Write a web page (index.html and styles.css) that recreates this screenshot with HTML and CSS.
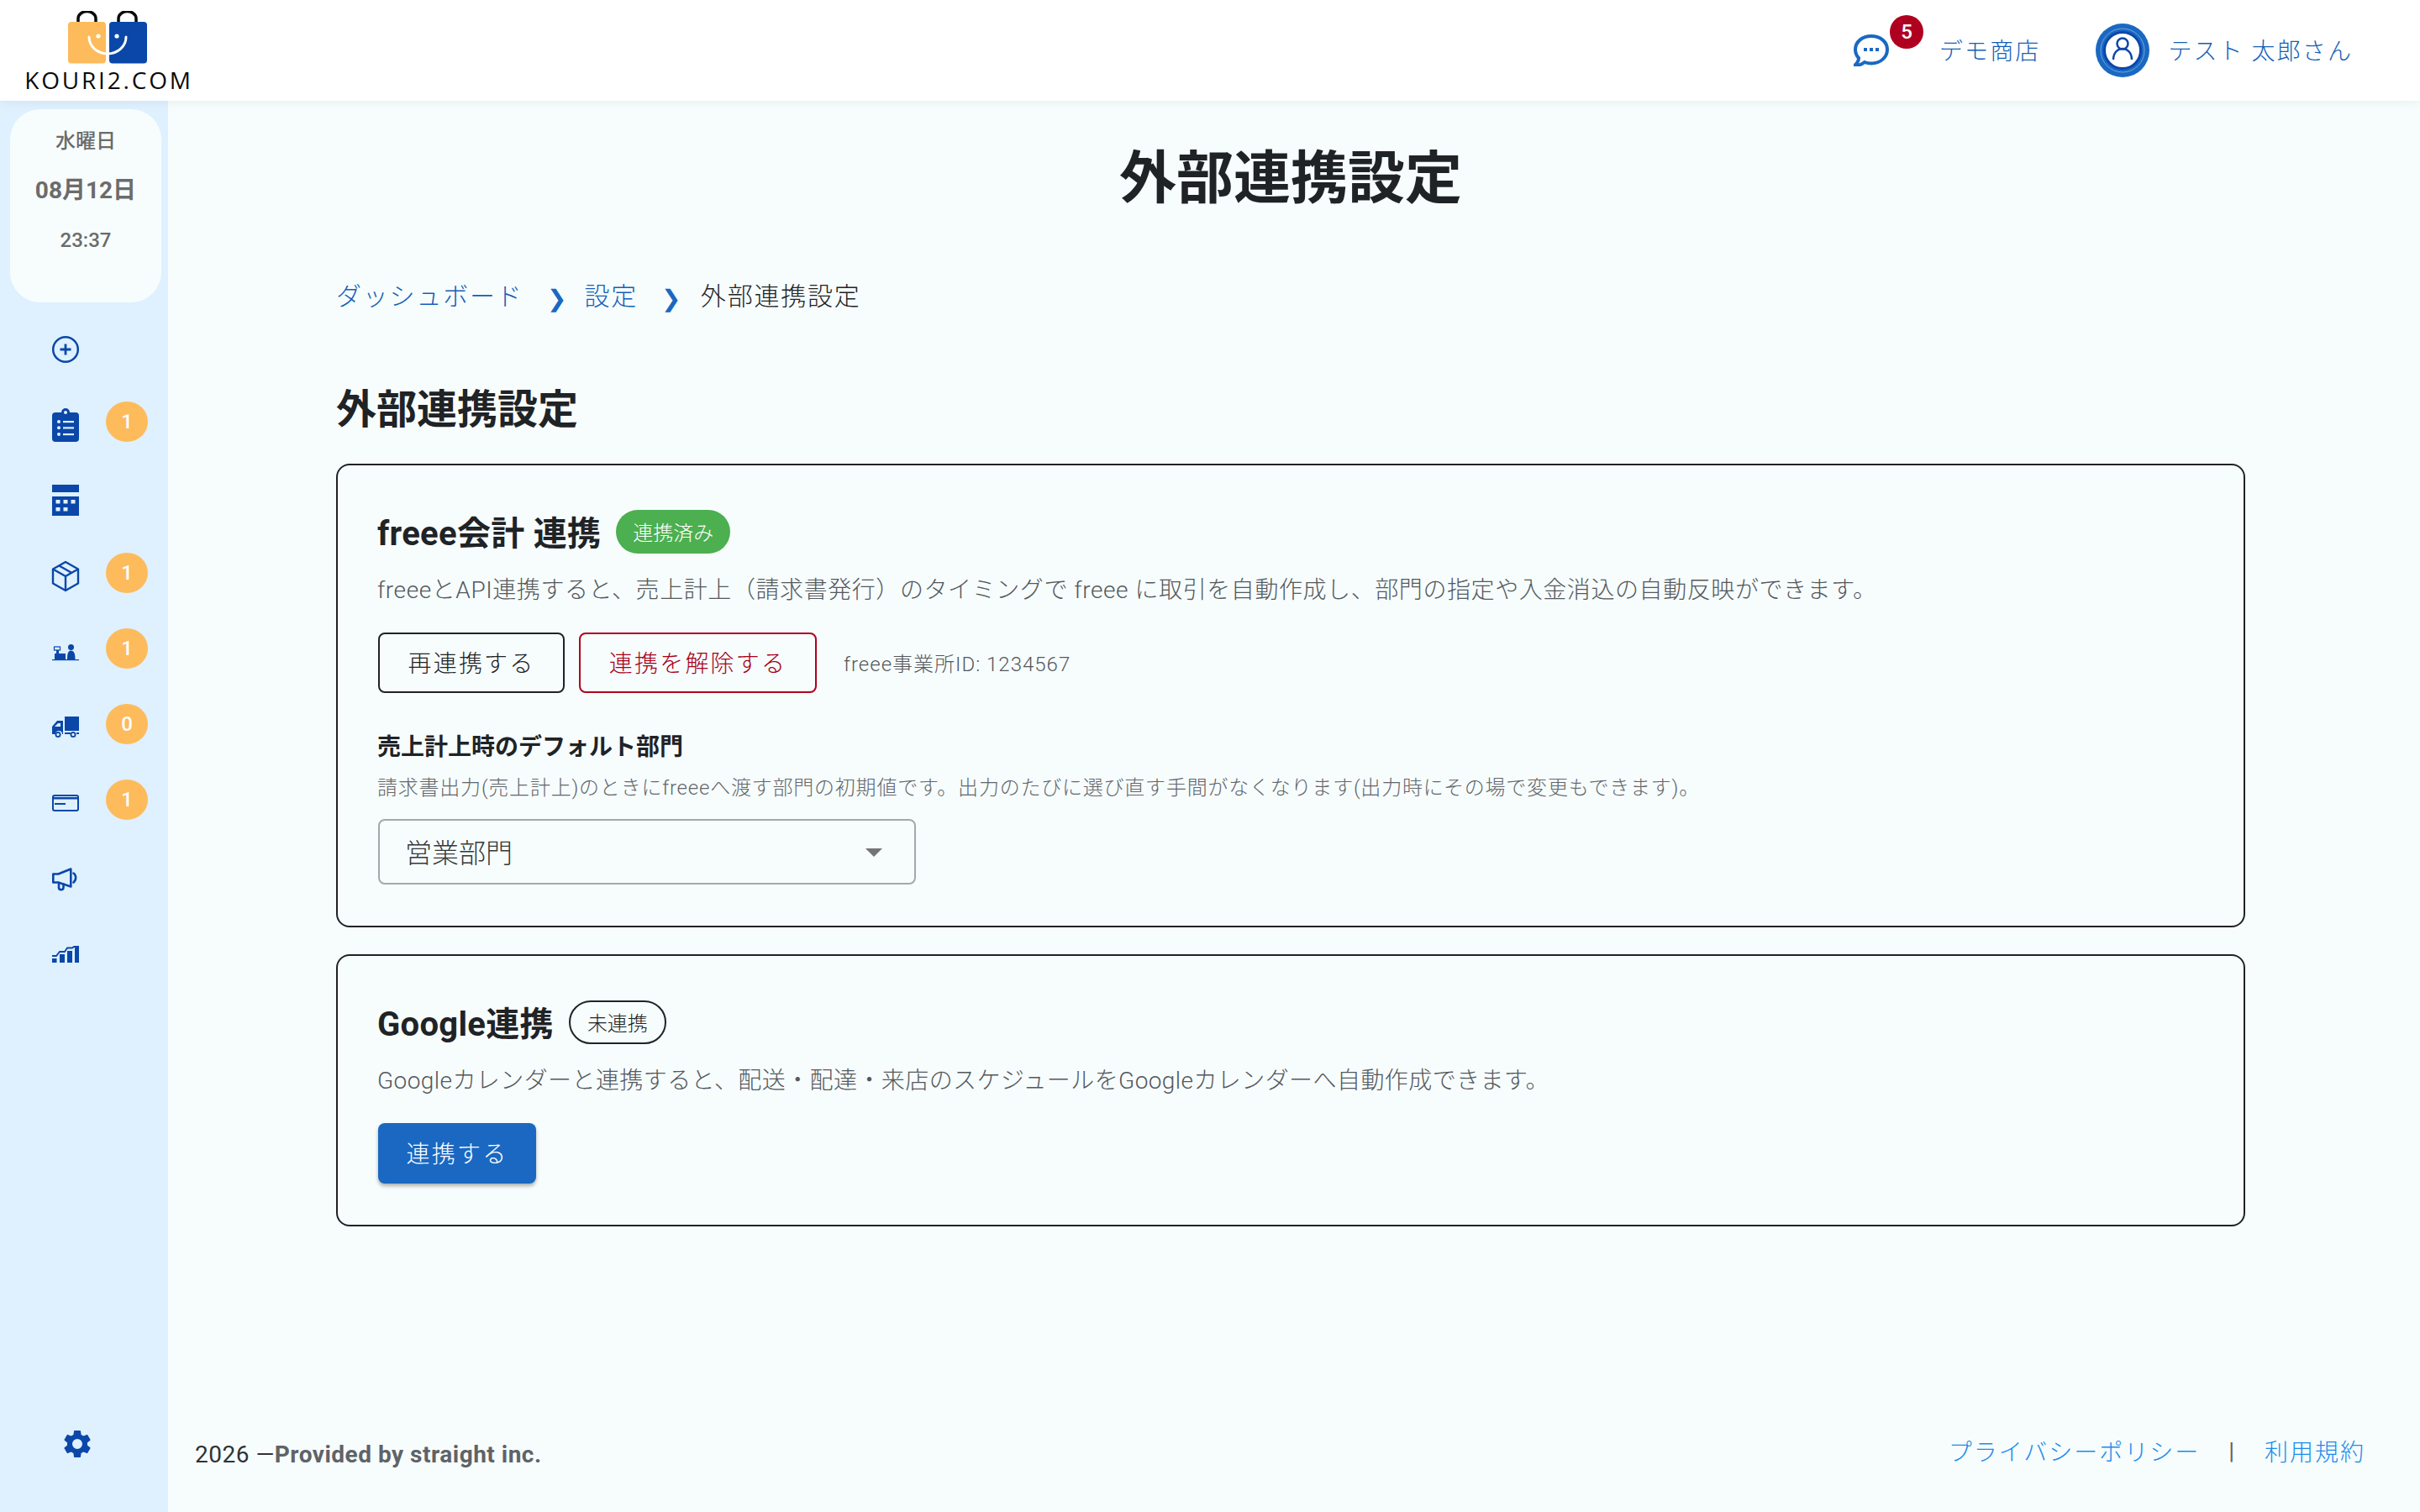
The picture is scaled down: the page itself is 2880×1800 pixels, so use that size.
FILE: index.html
```html
<!DOCTYPE html>
<html lang="ja">
<head>
<meta charset="utf-8">
<title>外部連携設定</title>
<link rel="stylesheet" href="styles.css">
</head>
<body>
<div class="app">
  <header class="topbar">
    <a class="logo">
      <svg class="logo-mark" viewBox="0 0 94 64" width="94" height="64">
        <path d="M12 14V9a10 8 0 0 1 21 0v5M60 14V9a10 8 0 0 1 21 0v5" fill="none" stroke="#0b0b0b" stroke-width="3.5"/>
        <rect x="0" y="13" width="45" height="49.500" rx="4" fill="#fdbb5c"/>
        <rect x="49" y="13" width="45" height="49.500" rx="4" fill="#0a47a9"/>
        <path d="M25 31a22 20 0 0 0 44 0" fill="none" stroke="#fff" stroke-width="3" stroke-linecap="round"/>
        <circle cx="36" cy="30" r="2.600" fill="#fff"/>
        <circle cx="58" cy="30" r="2.600" fill="#fff"/>
      </svg>
      <span class="logo-text">KOURI2.COM</span>
    </a>
    <div class="top-actions">
      <div class="shop">
        <span class="chat">
          <svg viewBox="0 0 42 38" width="42" height="38"><path d="M21 2C10 2 2 9 2 18c0 4 1.500 7.500 4 10 0 3-1.500 6-5 9 5 0 9-1.500 12-4 2.500 1 5 1.500 8 1.500 11 0 19-7.500 19-16.500S32 2 21 2z" fill="none" stroke="#1a68c2" stroke-width="4"/><rect x="12" y="16" width="4" height="4" fill="#1a68c2"/><rect x="19" y="16" width="4" height="4" fill="#1a68c2"/><rect x="26" y="16" width="4" height="4" fill="#1a68c2"/></svg>
          <span class="chat-badge">5</span>
        </span>
        <span class="top-link">デモ商店</span>
      </div>
      <div class="user">
        <svg viewBox="0 0 64 64" width="64" height="64"><circle cx="32" cy="32" r="32" fill="#1a68c2"/><circle cx="32" cy="32" r="26" fill="none" stroke="#6fa3dd" stroke-width="1"/><circle cx="32" cy="32" r="21" fill="#fff"/><circle cx="32" cy="32" r="21.500" fill="none" stroke="#0a47a9" stroke-width="3"/><circle cx="32" cy="24" r="6.500" fill="none" stroke="#0a47a9" stroke-width="2.500"/><path d="M21 43c0-8 5-13 11-13s11 5 11 13" fill="none" stroke="#0a47a9" stroke-width="2.500"/></svg>
        <span class="top-link">テスト 太郎さん</span>
      </div>
    </div>
  </header>

  <aside class="sidebar">
    <div class="clock">
      <div class="clock-day">水曜日</div>
      <div class="clock-date">08月12日</div>
      <div class="clock-time">23:37</div>
    </div>
    <nav class="nav">
      <div class="nav-row">
        <svg class="nav-icon" viewBox="0 0 32 40"><circle cx="16" cy="20" r="14.800" fill="none" stroke="#0a47a9" stroke-width="2.500"/><path d="M16 13.500v13M9.500 20h13" stroke="#0a47a9" stroke-width="2.800"/></svg>
      </div>
      <div class="nav-row">
        <svg class="nav-icon" viewBox="0 0 32 40"><rect x="0" y="5" width="32" height="35" rx="4" fill="#0a47a9"/><circle cx="16" cy="5" r="5" fill="#0a47a9"/><circle cx="16" cy="5" r="2" fill="#dff0ff"/><g fill="#dff0ff"><circle cx="8" cy="16" r="2"/><circle cx="8" cy="23.300" r="2"/><circle cx="8" cy="31" r="2"/><rect x="13" y="15" width="13" height="2.200"/><rect x="13" y="22.300" width="13" height="2.200"/><rect x="13" y="30" width="13" height="2.200"/></g></svg>
        <span class="badge">1</span>
      </div>
      <div class="nav-row">
        <svg class="nav-icon" viewBox="0 0 32 40"><rect y="1" width="32" height="9" fill="#0a47a9"/><rect y="15" width="32" height="23" fill="#0a47a9"/><g fill="#dff0ff"><rect x="4.500" y="19" width="5" height="4.500"/><rect x="13.500" y="19" width="5" height="4.500"/><rect x="22.500" y="19" width="5" height="4.500"/><rect x="4.500" y="28" width="5" height="4.500"/><rect x="13.500" y="28" width="5" height="4.500"/></g></svg>
      </div>
      <div class="nav-row">
        <svg class="nav-icon" viewBox="0 0 32 40"><g fill="none" stroke="#0a47a9" stroke-width="2.400" stroke-linejoin="round"><path d="M16 3L31 11.500V28.500L16 37L1 28.500V11.500z"/><path d="M1 11.500L16 20L31 11.500M16 20V37M8 7.300L23 15.800"/></g></svg>
        <span class="badge">1</span>
      </div>
      <div class="nav-row">
        <svg class="nav-icon" viewBox="0 0 32 40"><g fill="#0a47a9"><circle cx="22.500" cy="14.500" r="3.500"/><path d="M18 29c0-7 1-10.500 4.500-10.500S27.500 22 27.500 29z"/><rect x="3" y="22" width="13" height="7"/><rect x="2.500" y="14" width="7" height="4" fill="none" stroke="#0a47a9" stroke-width="1.200"/><rect x="5" y="18" width="3" height="4"/><rect y="29" width="32" height="1.200"/></g></svg>
        <span class="badge">1</span>
      </div>
      <div class="nav-row">
        <svg class="nav-icon" viewBox="0 0 32 40"><g fill="#0a47a9"><rect x="15" y="7" width="17" height="17"/><path d="M13 12H6L0 19v9h4a4 4 0 0 1 8 0h1zM3 19l4-4h3v4z" fill-rule="evenodd"/><rect x="15" y="26" width="7" height="2"/><rect x="29" y="26" width="3" height="2"/></g><circle cx="7" cy="28.500" r="2.600" fill="none" stroke="#0a47a9" stroke-width="1.800"/><circle cx="25" cy="28.500" r="2.600" fill="none" stroke="#0a47a9" stroke-width="1.800"/></svg>
        <span class="badge">0</span>
      </div>
      <div class="nav-row">
        <svg class="nav-icon" viewBox="0 0 32 40"><rect x="1" y="11" width="30" height="18" rx="2" fill="none" stroke="#0a47a9" stroke-width="2"/><rect x="1" y="13" width="30" height="2.500" fill="#0a47a9"/><rect x="3" y="20" width="13" height="2" fill="#0a47a9"/></svg>
        <span class="badge">1</span>
      </div>
      <div class="nav-row">
        <svg class="nav-icon" viewBox="0 0 32 40"><g fill="none" stroke="#0a47a9" stroke-width="2.600" stroke-linejoin="round" stroke-linecap="round"><path d="M1.300 14.500v10h6l15 5V8.500l-15 6z"/><path d="M8 25v5.500a2.500 2.500 0 0 0 5.500 0v-4"/><path d="M25.500 13.500c3.500 2.500 3.500 8 0 11"/></g></svg>
      </div>
      <div class="nav-row">
        <svg class="nav-icon" viewBox="0 0 32 40"><g fill="#0a47a9"><rect x="0" y="25" width="5.500" height="5"/><rect x="9" y="20" width="6" height="10"/><rect x="18" y="16" width="6" height="14"/><rect x="27" y="12" width="5" height="18"/></g><path d="M0 22h5l4-5h6l3-4.500h6l2-1.500h6" fill="none" stroke="#0a47a9" stroke-width="1.800"/></svg>
      </div>
    </nav>
    <svg class="gear" viewBox="0 0 24 24" width="40" height="40"><path fill="#0a47a9" d="M19.140 12.940c.04-.3.060-.61.060-.94 0-.32-.020-.64-.070-.94l2.030-1.580a.49.49 0 0 0 .12-.61l-1.920-3.320a.49.49 0 0 0-.59-.22l-2.390.96c-.5-.38-1.030-.7-1.620-.94l-.36-2.540a.48.48 0 0 0-.48-.41h-3.840a.47.47 0 0 0-.47.41l-.36 2.540c-.59.24-1.130.57-1.620.94l-2.390-.96a.49.49 0 0 0-.59.22L2.740 8.870a.47.47 0 0 0 .12.61l2.030 1.580c-.05.3-.09.63-.09.94s.020.64.070.94l-2.030 1.580a.49.49 0 0 0-.12.61l1.920 3.320c.12.22.37.29.59.22l2.390-.96c.5.38 1.030.7 1.620.94l.36 2.540c.05.24.24.41.48.41h3.840c.24 0 .44-.17.47-.41l.36-2.540c.59-.24 1.130-.56 1.620-.94l2.390.96c.22.080.47 0 .59-.22l1.920-3.320a.47.47 0 0 0-.12-.61l-2.010-1.580zM12 15.600a3.600 3.600 0 1 1 0-7.200 3.600 3.600 0 0 1 0 7.200z"/></svg>
  </aside>

  <main class="main">
    <h1 class="page-title">外部連携設定</h1>
    <div class="crumbs">
      <a class="crumb-link">ダッシュボード</a>
      <span class="crumb-sep">❯</span>
      <a class="crumb-link">設定</a>
      <span class="crumb-sep">❯</span>
      <span class="crumb-current">外部連携設定</span>
    </div>
    <h2 class="section-title">外部連携設定</h2>

    <section class="card">
      <div class="card-head">
        <h3 class="card-title">freee会計 連携</h3>
        <span class="chip chip-on">連携済み</span>
      </div>
      <p class="desc">freeeとAPI連携すると、売上計上（請求書発行）のタイミングで freee に取引を自動作成し、部門の指定や入金消込の自動反映ができます。</p>
      <div class="actions">
        <button class="btn btn-outline">再連携する</button>
        <button class="btn btn-danger">連携を解除する</button>
        <span class="office">freee事業所ID: 1234567</span>
      </div>
      <div class="field-label">売上計上時のデフォルト部門</div>
      <div class="field-help">請求書出力(売上計上)のときにfreeeへ渡す部門の初期値です。出力のたびに選び直す手間がなくなります(出力時にその場で変更もできます)。</div>
      <div class="select">
        <span class="select-value">営業部門</span>
        <span class="select-arrow"></span>
      </div>
    </section>

    <section class="card card-google">
      <div class="card-head">
        <h3 class="card-title">Google連携</h3>
        <span class="chip chip-off">未連携</span>
      </div>
      <p class="desc">Googleカレンダーと連携すると、配送・配達・来店のスケジュールをGoogleカレンダーへ自動作成できます。</p>
      <div class="actions">
        <button class="btn btn-primary">連携する</button>
      </div>
    </section>

    <footer class="footer">
      <div class="copy">2026 —<strong>Provided by straight inc.</strong></div>
      <div class="legal">
        <a>プライバシーポリシー</a>
        <span class="legal-sep">|</span>
        <a>利用規約</a>
      </div>
    </footer>
  </main>
</div>
</body>
</html>
```
FILE: styles.css
```css
* { box-sizing: border-box; }
html, body { margin: 0; height: 100%; }
body {
  font-family: Roboto, "Noto Sans CJK JP", sans-serif;
  font-weight: 300;
  color: #1f2326;
  background: #f7fdfd;
}
.app {
  display: grid;
  grid-template-columns: 200px 1fr;
  grid-template-rows: 120px 1fr;
  height: 1800px;
  width: 2880px;
  overflow: hidden;
}
.topbar {
  grid-column: 1 / 3;
  position: relative;
  z-index: 2;
  display: flex;
  justify-content: space-between;
  align-items: flex-start;
  background: #fff;
  box-shadow: 0 2px 12px rgba(0, 0, 0, .06);
}
.logo {
  display: flex;
  flex-direction: column;
  align-items: center;
  width: 256px;
  padding-top: 13px;
}
.logo-mark { display: block; }
.logo-text {
  font-family: "Open Sans", sans-serif;
  font-weight: 400;
  font-size: 28px;
  line-height: 30px;
  letter-spacing: 2.800px;
  color: #0b0b0b;
  margin: 3px 0 0 3px;
}
.top-actions {
  display: flex;
  align-items: center;
  height: 118px;
  padding-right: 80px;
}
.shop, .user { display: flex; align-items: center; }
.shop { margin-right: 66px; }
.chat { position: relative; display: block; width: 42px; height: 38px; margin-right: 60px; margin-top: 2px; }
.chat svg { display: block; }
.chat-badge {
  position: absolute;
  left: 43px;
  top: -23px;
  width: 40px;
  height: 40px;
  border-radius: 50%;
  background: #b0001f;
  color: #fff;
  font-size: 24px;
  font-weight: 500;
  line-height: 40px;
  text-align: center;
}
.user svg { display: block; margin-right: 22px; margin-top: 2px; }
.top-link {
  font-size: 28px;
  letter-spacing: 2.100px;
  color: #155fb8;
}
.sidebar {
  position: relative;
  background: #dff0ff;
  padding: 10px 8px 0 12px;
}
.clock {
  width: 180px;
  height: 230px;
  border-radius: 36px;
  background: #f7fdfd;
  color: #6b6b6b;
  text-align: center;
  font-weight: 500;
  padding-top: 16px;
}
.clock-day { font-size: 24px; line-height: 44px; }
.clock-date { font-size: 28px; line-height: 44px; font-weight: 700; margin-top: 15px; }
.clock-time { font-size: 24px; line-height: 44px; margin-top: 15px; }
.nav { margin-top: 7px; margin-left: 50px; }
.nav-row { display: flex; height: 90px; align-items: center; gap: 32px; }
.nav-icon { width: 32px; height: 40px; flex: none; margin-top: 8px; overflow: visible; }
.badge {
  width: 50px;
  height: 48px;
  border-radius: 50%;
  background: #fdbb5c;
  color: #fff;
  font-size: 24px;
  font-weight: 500;
  line-height: 48px;
  text-align: center;
}
.gear { position: absolute; left: 72px; top: 1579px; }
.main {
  display: flex;
  flex-direction: column;
  padding: 0 208px 0 200px;
  min-width: 0;
  position: relative;
}
.page-title {
  margin: 50px 0 0;
  text-align: center;
  font-size: 68px;
  line-height: 86px;
  font-weight: 700;
}
.crumbs {
  display: flex;
  align-items: center;
  margin-top: 66px;
  height: 56px;
  font-size: 30px;
  letter-spacing: 1.800px;
}
.crumb-link { color: #155fb8; }
.crumb-sep { color: #1a68c2; font-family: "DejaVu Sans", sans-serif; font-size: 28px; margin: 10px 20px 0 28px; }
.crumb-sep + .crumb-link + .crumb-sep { margin: 10px 22px 0 28px; }
.section-title {
  margin: 76px 0 0;
  font-size: 48px;
  line-height: 68px;
  font-weight: 700;
}
.card {
  margin-top: 30px;
  height: 552px;
  border: 2px solid #1f2326;
  border-radius: 16px;
  padding: 53px 46px 0 48px;
}
.card-google { height: 324px; margin-top: 32px; }
.card-head { display: flex; align-items: center; gap: 18px; height: 52px; }
.card-title { margin: 6px 0 0 -1px; font-size: 40px; font-weight: 700; line-height: 52px; letter-spacing: .300px; }
.chip {
  display: flex;
  align-items: center;
  justify-content: center;
  height: 52px;
  padding-bottom: 2px;
  border-radius: 26px;
  font-size: 24px;
}
.chip-on { width: 136px; background: #4caf50; color: #fff; }
.chip-off { width: 116px; border: 2px solid #1f2326; }
.desc {
  margin: 24px 0 0 -1px;
  font-size: 28px;
  line-height: 40px;
  letter-spacing: .575px;
  color: #54585c;
}
.card-google .desc { letter-spacing: .420px; }
.actions { display: flex; align-items: center; gap: 17px; margin-top: 30px; }
.btn {
  font: inherit;
  font-size: 28px;
  letter-spacing: 2.200px;
  height: 72px;
  padding: 0 0 2px;
  border-radius: 8px;
  background: transparent;
}
.btn-outline { width: 222px; border: 2px solid #1f2326; color: #1f2326; }
.btn-danger { width: 283px; border: 2px solid #b0001f; color: #a80018; }
.btn-primary {
  width: 188px;
  border: 0;
  background: #1a68c2;
  color: #fff;
  box-shadow: 0 3px 4px rgba(0, 0, 0, .3);
}
.office { font-size: 24px; letter-spacing: 1px; color: #54585c; margin: -2px 0 0 15px; }
.field-label { margin: 44px 0 0 -1px; font-size: 28px; line-height: 42px; font-weight: 700; }
.field-help { margin: 10px 0 0 -1px; font-size: 24px; line-height: 34px; letter-spacing: .780px; color: #62666a; }
.select {
  display: flex;
  justify-content: space-between;
  align-items: center;
  width: 640px;
  height: 78px;
  margin-top: 20px;
  border: 2px solid #a5a8aa;
  border-radius: 8px;
  padding: 0 38px 0 30px;
  font-size: 32px;
  color: #34383b;
}
.select-value { margin-top: -3px; }
.select-arrow {
  width: 0;
  height: 0;
  border-left: 10px solid transparent;
  border-right: 10px solid transparent;
  border-top: 10px solid #757575;
  margin-top: 2px;
}
.footer {
  position: absolute;
  left: 32px;
  right: 65px;
  bottom: 52px;
  display: flex;
  justify-content: space-between;
  align-items: flex-start;
  font-size: 28px;
}
.copy { color: #2f3336; margin-top: 8px; letter-spacing: .500px; font-weight: 400; }
.copy strong { color: #5f6368; font-weight: 700; }
.legal { display: flex; align-items: center; color: #1a8cec; letter-spacing: 2px; }
.legal-sep { color: #5f6368; margin: 0 36px 0 34px; letter-spacing: 0; font-weight: 400; }
```
